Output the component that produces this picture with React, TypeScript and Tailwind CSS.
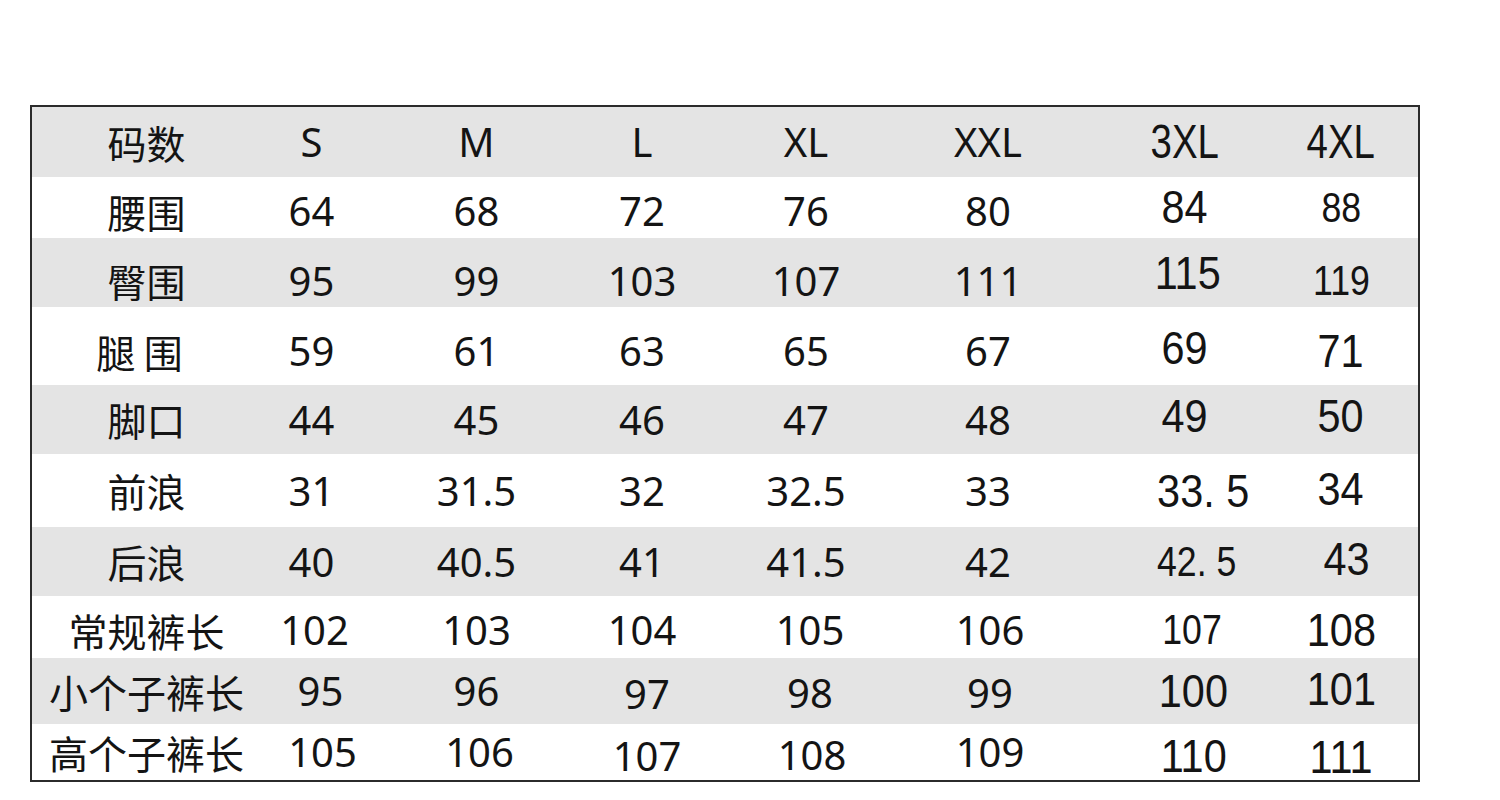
const COLS = [
  "w-[197px] pl-[32px]",
  "w-[165px]",
  "w-[165px]",
  "w-[166px]",
  "w-[162px]",
  "w-[202px]",
  "w-[191px]",
  "w-[136px] pr-[14px]",
];

// base look for the size columns S..XXL
const BASE = "text-[40px] font-['Noto_Sans','Noto_Sans_CJK_SC',sans-serif]";
// 3XL / 4XL were typed in a narrower Arial-like face
const ARIAL = "text-[46px] font-['Liberation_Sans',sans-serif] inline-block scale-x-[0.9]";
const NARROW = "text-[42px] font-['Liberation_Sans',sans-serif] inline-block scale-x-[0.85]";

type Cell = string | { t: string; c?: string; pad?: string };

interface Row {
  label: string;
  labelClass?: string;
  gray: boolean;
  h: string;
  shift?: string;
  cells: Cell[];
}

const rows: Row[] = [
  {
    label: "码数",
    gray: true,
    h: "h-[70px]",
    cells: [
      "S",
      "M",
      "L",
      "XL",
      "XXL",
      { t: "3XL", c: "text-[48px] font-['Liberation_Sans',sans-serif] inline-block scale-x-[0.8]" },
      { t: "4XL", c: "text-[48px] font-['Liberation_Sans',sans-serif] inline-block scale-x-[0.8]" },
    ],
  },
  {
    label: "腰围",
    gray: false,
    h: "h-[61px]",
    shift: "pt-[7px]",
    cells: ["64", "68", "72", "76", "80", { t: "84", c: ARIAL, pad: "pb-[8px]" }, { t: "88", c: NARROW, pad: "pb-[6px] pr-[8px]" }],
  },
  {
    label: "臀围",
    gray: true,
    h: "h-[69px]",
    shift: "pt-[16px]",
    cells: ["95", "99", "103", "107", "111", { t: "115", c: ARIAL, pad: "pb-[16px] pl-[6px]" }, { t: "119", c: NARROW }],
  },
  {
    label: "腿 围",
    labelClass: "pr-[14px]",
    gray: false,
    h: "h-[78px]",
    shift: "pt-[10px]",
    cells: ["59", "61", "63", "65", "67", { t: "69", c: ARIAL, pad: "pb-[6px]" }, { t: "71", c: ARIAL }],
  },
  {
    label: "脚口",
    gray: true,
    h: "h-[69px]",
    cells: ["44", "45", "46", "47", "48", { t: "49", c: ARIAL, pad: "pb-[8px]" }, { t: "50", c: ARIAL, pad: "pb-[8px]" }],
  },
  {
    label: "前浪",
    gray: false,
    h: "h-[73px]",
    cells: ["31", "31.5", "32", "32.5", "33", { t: "33. 5", c: ARIAL, pad: "pl-[38px]" }, { t: "34", c: ARIAL, pad: "pb-[4px]" }],
  },
  {
    label: "后浪",
    gray: true,
    h: "h-[69px]",
    cells: ["40", "40.5", "41", "41.5", "42", { t: "42. 5", c: NARROW, pad: "pl-[24px]" }, { t: "43", c: ARIAL, pad: "pl-[12px] pb-[6px]" }],
  },
  {
    label: "常规裤长",
    gray: false,
    h: "h-[62px]",
    shift: "pt-[6px]",
    cells: [
      { t: "102", pad: "pl-[6px]" },
      "103",
      "104",
      { t: "105", pad: "pl-[8px]" },
      { t: "106", pad: "pl-[4px]" },
      { t: "107", c: NARROW, pad: "pl-[16px]" },
      { t: "108", c: ARIAL },
    ],
  },
  {
    label: "小个子裤长",
    gray: true,
    h: "h-[66px]",
    cells: [
      { t: "95", pad: "pl-[18px]" },
      "96",
      { t: "97", pad: "pl-[10px] pt-[6px]" },
      { t: "98", pad: "pl-[8px] pt-[4px]" },
      { t: "99", pad: "pl-[4px] pt-[4px]" },
      { t: "100", c: ARIAL, pad: "pl-[18px]" },
      { t: "101", c: ARIAL, pad: "pb-[4px]" },
    ],
  },
  {
    label: "高个子裤长",
    gray: false,
    h: "h-[56px]",
    cells: [
      { t: "105", pad: "pl-[22px]" },
      { t: "106", pad: "pl-[6px]" },
      { t: "107", pad: "pl-[10px] pt-[8px]" },
      { t: "108", pad: "pl-[12px] pt-[6px]" },
      { t: "109", pad: "pl-[4px]" },
      { t: "110", c: ARIAL, pad: "pl-[18px] pt-[8px]" },
      { t: "111", c: ARIAL, pad: "pt-[10px]" },
    ],
  },
];

export default function App() {
  return (
    <div className="h-[800px] w-[1500px] bg-white pl-[30px] pt-[105px] text-[#141414]">
      <div className="w-[1390px] border-2 border-[#2b2b2b]">
        {rows.map((row) => (
          <div
            key={row.label}
            className={`flex ${row.h} ${row.gray ? "bg-[#e4e4e4]" : "bg-white"}`}
          >
            <div className={`${COLS[0]} flex items-center justify-center ${row.shift ?? ""}`}>
              <span className={`text-[39px] leading-none font-['Noto_Sans_CJK_SC',sans-serif] whitespace-pre ${row.labelClass ?? ""}`}>
                {row.label}
              </span>
            </div>
            {row.cells.map((cell, i) => {
              const c = typeof cell === "string" ? { t: cell } : cell;
              return (
                <div
                  key={i}
                  className={`${COLS[i + 1]} flex items-center justify-center ${row.shift ?? ""} ${c.pad ?? ""}`}
                >
                  <span className={`leading-none whitespace-pre ${c.c ?? BASE}`}>{c.t}</span>
                </div>
              );
            })}
          </div>
        ))}
      </div>
    </div>
  );
}
